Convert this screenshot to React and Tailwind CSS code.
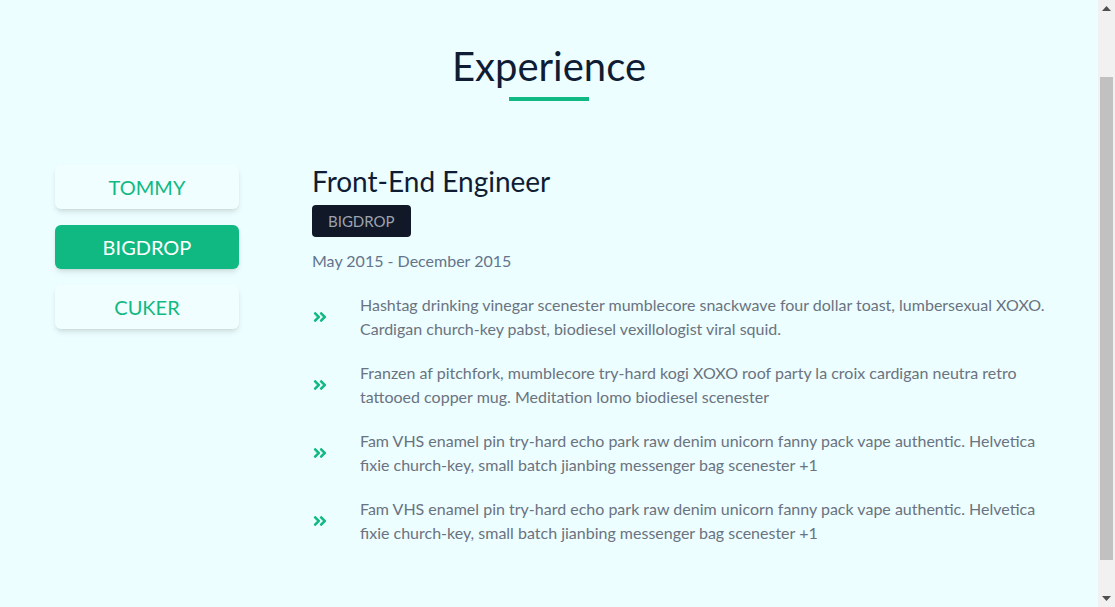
import React, { useState, useEffect } from 'react';
import { FaAngleDoubleRight } from 'react-icons/fa';

const jobs = {
  TOMMY: {
    title: 'Full Stack Web Developer',
    dates: 'December 2015 - Present',
    duties: [
      'Tote bag sartorial mlkshk air plant vinyl banjo lumbersexual poke leggings offal cold-pressed brunch neutra. Hammock photo booth live-edge disrupt.',
      'Post-ironic selvage chambray sartorial freegan meditation. Chambray chartreuse kombucha meditation, man bun four dollar toast street art cloud bread live-edge heirloom.',
      'Butcher drinking vinegar franzen authentic messenger bag copper mug food truck taxidermy. Mumblecore lomo echo park readymade iPhone migas single-origin coffee franzen cloud bread tilde chicharrones pinterest.',
    ],
  },
  BIGDROP: {
    title: 'Front-End Engineer',
    dates: 'May 2015 - December 2015',
    duties: [
      'Hashtag drinking vinegar scenester mumblecore snackwave four dollar toast, lumbersexual XOXO. Cardigan church-key pabst, biodiesel vexillologist viral squid.',
      'Franzen af pitchfork, mumblecore try-hard kogi XOXO roof party la croix cardigan neutra retro tattooed copper mug. Meditation lomo biodiesel scenester',
      'Fam VHS enamel pin try-hard echo park raw denim unicorn fanny pack vape authentic. Helvetica fixie church-key, small batch jianbing messenger bag scenester +1',
      'Fam VHS enamel pin try-hard echo park raw denim unicorn fanny pack vape authentic. Helvetica fixie church-key, small batch jianbing messenger bag scenester +1',
    ],
  },
  CUKER: {
    title: 'Engineering Intern',
    dates: 'May 2014 - September 2015',
    duties: [
      'I\'m baby woke mlkshk wolf bitters live-edge blue bottle, hammock freegan copper mug whatever cold-pressed',
      'Flexitarian poutine waistcoat, chartreuse bicycle rights helvetica slow-carb unicorn vexillologist.',
      'Hexagon man braid yr crucifix chartreuse everyday carry photo booth kitsch offal lomo tofu.',
    ],
  },
};

// the browser's scrollbar, drawn since the headless window hides it
const Scrollbar = () => (
  <div className="fixed right-0 top-0 flex h-screen w-[17px] flex-col items-center bg-[#f1f1f1]">
    <svg width="9" height="5" viewBox="0 0 9 5" className="mt-[6px]">
      <path d="M0 5 L4.5 0 L9 5 Z" fill="#505050" />
    </svg>
    <div className="mt-[66px] h-[483px] w-[13px] bg-[#c1c1c1]"></div>
    <div className="flex-1"></div>
    <svg width="9" height="5" viewBox="0 0 9 5" className="mb-[6px]">
      <path d="M0 0 L9 0 L4.5 5 Z" fill="#505050" />
    </svg>
  </div>
);

const App = () => {
  const [active, setActive] = useState('BIGDROP');
  const job = jobs[active];

  useEffect(() => {
    window.scrollTo(0, 75);
  }, []);

  return (
    <div className="min-h-screen bg-[#ecfeff] text-[#0f172a]" style={{ fontFamily: 'Lato, "Open Sans", sans-serif' }}>
      <section className="mr-[17px] pt-[116px] pb-[100px]">
        <div className="flex flex-col items-center">
          <h2 className="text-[40px] leading-[50px] font-normal text-[#0f1c33]">Experience</h2>
          <div className="mt-[6px] h-1 w-20 bg-[#10b981]"></div>
        </div>

        <div className="mt-[64px] flex pl-[55px] pr-[36px]">
          <div className="flex w-[184px] shrink-0 flex-col gap-4">
            {Object.keys(jobs).map((name) => (
              <button
                key={name}
                onClick={() => setActive(name)}
                className={
                  name === active
                    ? 'h-11 rounded-md bg-[#10b981] text-xl text-white shadow-md'
                    : 'h-11 rounded-md bg-[#f0feff] text-xl text-[#10b981] shadow-md'
                }
              >
                {name}
              </button>
            ))}
          </div>

          <div className="ml-[73px] flex-1 -mt-[2px]">
            <h3 className="text-[28px] leading-9 text-[#0f1c33]">{job.title}</h3>
            <span className="mt-1.5 inline-flex h-8 items-center rounded bg-[#111827] px-4 text-[15px] text-[#9ca3af]">
              {active}
            </span>
            <p className="mt-3 text-base leading-6 text-[#64748b]">{job.dates}</p>
            <div className="mt-5 flex flex-col gap-5">
              {job.duties.map((duty, i) => (
                <div key={i} className="flex items-center">
                  <FaAngleDoubleRight className="w-4 h-4 shrink-0 text-[#10b981]" />
                  <p className="ml-8 text-base leading-6 text-[#6b7280]">{duty}</p>
                </div>
              ))}
            </div>
          </div>
        </div>
      </section>
      <Scrollbar />
    </div>
  );
};

export default App;
